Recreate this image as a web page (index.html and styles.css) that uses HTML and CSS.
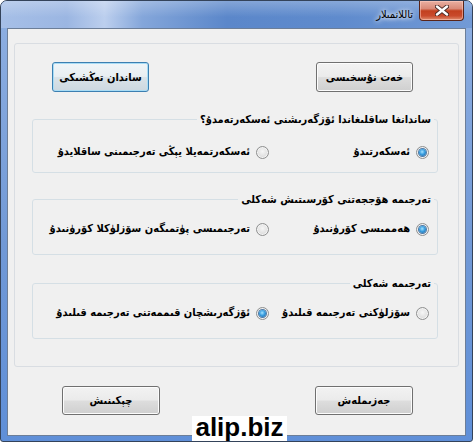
FILE: index.html
```html
<!DOCTYPE html>
<html lang="ug">
<head>
    <meta charset="UTF-8">
    <meta name="viewport" content="width=device-width, initial-scale=1.0">
    <title>تاللانمىلار</title>
    <link rel="stylesheet" href="styles.css">
</head>
<body>
    <div class="window" dir="rtl">
        <div class="titlebar">
            <button class="close-btn" aria-label="close">
                <svg width="14" height="11" viewBox="0 0 14 11">
                    <path d="M2 1.5 L12 9.5 M12 1.5 L2 9.5" stroke="#4a2a25" stroke-width="4.2" stroke-linecap="round"/>
                    <path d="M2 1.5 L12 9.5 M12 1.5 L2 9.5" stroke="#ffffff" stroke-width="2.4" stroke-linecap="round"/>
                </svg>
            </button>
            <span class="title">تاللانمىلار</span>
        </div>

        <div class="client">
            <div class="panel">
                <div class="top-buttons">
                    <button class="btn">خەت نۇسخىسى</button>
                    <button class="btn btn-default">ساندان تەڭشىكى</button>
                </div>

                <fieldset class="group group-first">
                    <legend>ساندانغا ساقلىغاندا ئۆزگەرىشنى ئەسكەرتەمدۇ؟</legend>
                    <div class="options">
                        <label class="option"><span class="radio checked"></span>ئەسكەرتىدۇ</label>
                        <label class="option"><span class="radio"></span>ئەسكەرتمەيلا يېڭى تەرجىمىنى ساقلايدۇ</label>
                    </div>
                </fieldset>

                <fieldset class="group">
                    <legend>تەرجىمە ھۆججەتنى كۆرسىتىش شەكلى</legend>
                    <div class="options">
                        <label class="option"><span class="radio checked"></span>ھەممىسى كۆرۈنىدۇ</label>
                        <label class="option"><span class="radio"></span>تەرجىمىسى پۈتمىگەن سۆزلۈكلا كۆرۈنىدۇ</label>
                    </div>
                </fieldset>

                <fieldset class="group">
                    <legend>تەرجىمە شەكلى</legend>
                    <div class="options">
                        <label class="option"><span class="radio"></span>سۆزلۈكنى تەرجىمە قىلىدۇ</label>
                        <label class="option"><span class="radio checked"></span>ئۆزگەرىشچان قىممەتنى تەرجىمە قىلىدۇ</label>
                    </div>
                </fieldset>
            </div>

            <div class="bottom-buttons">
                <button class="btn">جەزىملەش</button>
                <button class="btn">چېكىنىش</button>
            </div>
        </div>

        <div class="watermark" dir="ltr">alip.biz</div>
    </div>
</body>
</html>
```

FILE: styles.css
```css
body {
    margin: 0;
    background-color: #ffffff;
    font-family: "DejaVu Sans Condensed", "DejaVu Sans", sans-serif;
}
.window {
    position: relative;
    box-sizing: border-box;
    width: 473px;
    height: 442px;
    display: flex;
    flex-direction: column;
    border: 1px solid #34435a;
    border-radius: 7px 7px 3px 3px;
    background: linear-gradient(180deg, #8fb0e2 0%, #7199d6 55%, #5f8fd8 100%);
    overflow: hidden;
}
.titlebar {
    height: 27px;
    display: flex;
    align-items: flex-start;
    padding-right: 8px;
    background:
        linear-gradient(180deg, rgba(255, 255, 255, 0.25) 0%, rgba(255, 255, 255, 0) 60%),
        linear-gradient(90deg, #a6bfe7 0%, #9bb6e2 14%, #bccfee 22%, #84a6da 30%, #5b87ca 48%, #5f8bcd 72%, #729ad6 100%);
}
.close-btn {
    box-sizing: border-box;
    width: 45px;
    height: 20px;
    padding: 0;
    display: flex;
    justify-content: center;
    align-items: center;
    border: 1px solid #5a2418;
    border-top: none;
    border-radius: 0 0 4px 4px;
    background: linear-gradient(180deg, #eab0a2 0%, #d98a78 40%, #c2401f 52%, #c94a2c 78%, #df8d6e 100%);
    box-shadow: inset 0 0 0 1px rgba(255, 210, 200, 0.5);
}
.title {
    margin-right: 6px;
    margin-top: 6px;
    font-size: 11px;
    line-height: 16px;
    color: #000000;
    text-shadow: 0 0 4px #ffffff, 0 0 6px rgba(255, 255, 255, 0.9);
}
.client {
    flex: 1;
    margin: 0 6px 5px;
    border: 1px solid #6c7e98;
    background-color: #f0f0f0;
    display: flex;
    flex-direction: column;
}
.panel {
    box-sizing: border-box;
    height: 324px;
    margin: 14px 6px 0;
    padding-top: 18px;
    border: 1px solid #d9dde2;
    border-radius: 3px;
}
.top-buttons {
    display: flex;
    justify-content: space-between;
    padding: 0 45px 0 37px;
}
.btn {
    box-sizing: border-box;
    width: 97px;
    height: 30px;
    padding: 0;
    font-family: "DejaVu Sans Condensed", "DejaVu Sans", sans-serif;
    font-size: 11px;
    font-weight: bold;
    white-space: nowrap;
    color: #000000;
    border: 1px solid #707070;
    border-radius: 3px;
    background: linear-gradient(180deg, #f2f2f2 0%, #ebebeb 48%, #dddddd 52%, #cfcfcf 100%);
    box-shadow: inset 0 0 0 1px #fcfcfc;
}
.btn-default {
    border-color: #3c7fb1;
    box-shadow: inset 0 0 0 1px #a8dcf5;
    background: linear-gradient(180deg, #f0f5f8 0%, #e8eef2 48%, #d9e2e8 52%, #cdd8e0 100%);
}
.group {
    min-width: 0;
    margin: 20px 20px 0 17px;
    padding: 14px 8px 17px;
    border: 1px solid #d5dfe5;
    border-radius: 3px;
}
.group-first {
    padding-top: 17px;
    padding-bottom: 12px;
}
.group legend {
    padding: 0 3px;
    margin-right: -5px;
    font-size: 11px;
    font-weight: bold;
    line-height: 15px;
    color: #000000;
}
.group + .group {
    margin-top: 19px;
}
.group + .group + .group {
    margin-top: 21px;
}
.options {
    display: grid;
    grid-template-columns: 160px 1fr;
    height: 16px;
}
.option {
    display: flex;
    align-items: center;
    gap: 6px;
    font-size: 11px;
    font-weight: bold;
    line-height: 16px;
    color: #000000;
    white-space: nowrap;
}
.radio {
    box-sizing: border-box;
    width: 13px;
    height: 13px;
    flex-shrink: 0;
    border: 1px solid #8e8f8f;
    border-radius: 50%;
    background: radial-gradient(circle at 50% 40%, #f6f6f6 0%, #e2e2e2 55%, #cfcfcf 100%);
    box-shadow: inset 0 0 0 1px #f4f4f4;
    display: flex;
    justify-content: center;
    align-items: center;
}
.radio.checked::after {
    content: "";
    width: 7px;
    height: 7px;
    border-radius: 50%;
    background: radial-gradient(circle at 45% 40%, #a6e2ff 0%, #3a9fe0 45%, #1a5a99 100%);
    box-shadow: 0 0 0 1px #4f7ba8;
}
.bottom-buttons {
    display: flex;
    justify-content: space-between;
    margin-top: 19px;
    padding: 0 52px 0 54px;
}
.bottom-buttons .btn {
    width: 98px;
    height: 29px;
}
.watermark {
    position: absolute;
    left: 191px;
    top: 415px;
    width: 95px;
    height: 25px;
    background-color: #ffffff;
    font-family: "Liberation Sans", Arial, sans-serif;
    font-size: 26px;
    font-weight: bold;
    line-height: 23px;
    text-align: center;
    color: #000000;
}
```
